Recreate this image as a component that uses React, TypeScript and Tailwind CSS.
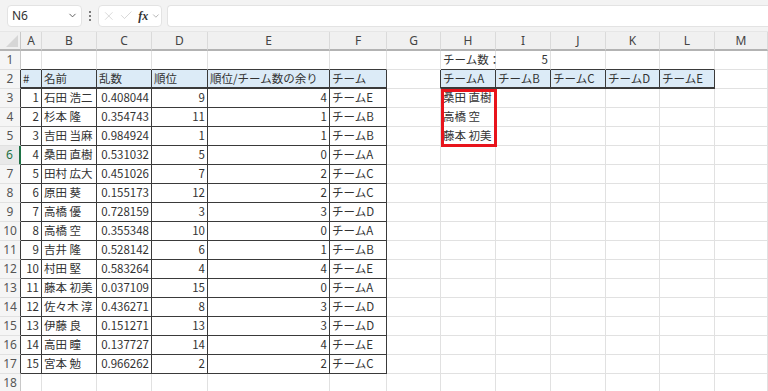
import React from 'react';
import { ChevronDown, X, Check } from 'lucide-react';

const cols = ['A', 'B', 'C', 'D', 'E', 'F', 'G', 'H', 'I', 'J', 'K', 'L', 'M'];

type Cell = { v: string; right?: boolean };

const people: [number, string, string, number, number, string][] = [
    [1, '石田 浩二', '0.408044', 9, 4, 'チームE'],
    [2, '杉本 隆', '0.354743', 11, 1, 'チームB'],
    [3, '吉田 当麻', '0.984924', 1, 1, 'チームB'],
    [4, '桑田 直樹', '0.531032', 5, 0, 'チームA'],
    [5, '田村 広大', '0.451026', 7, 2, 'チームC'],
    [6, '原田 葵', '0.155173', 12, 2, 'チームC'],
    [7, '高橋 優', '0.728159', 3, 3, 'チームD'],
    [8, '高橋 空', '0.355348', 10, 0, 'チームA'],
    [9, '吉井 隆', '0.528142', 6, 1, 'チームB'],
    [10, '村田 堅', '0.583264', 4, 4, 'チームE'],
    [11, '藤本 初美', '0.037109', 15, 0, 'チームA'],
    [12, '佐々木 淳', '0.436271', 8, 3, 'チームD'],
    [13, '伊藤 良', '0.151271', 13, 3, 'チームD'],
    [14, '高田 瞳', '0.137727', 14, 4, 'チームE'],
    [15, '宮本 勉', '0.966262', 2, 2, 'チームC'],
];

const teamA = ['桑田 直樹', '高橋 空', '藤本 初美'];

// cells[row][colIndex]
const buildCells = () => {
    const cells: Record<number, Record<number, Cell>> = {};
    const set = (r: number, c: number, cell: Cell) => {
        cells[r] = cells[r] || {};
        cells[r][c] = cell;
    };
    set(1, 7, { v: 'チーム数：' });
    set(1, 8, { v: '5', right: true });
    ['#', '名前', '乱数', '順位', '順位/チーム数の余り', 'チーム'].forEach((h, i) => set(2, i, { v: h }));
    ['チームA', 'チームB', 'チームC', 'チームD', 'チームE'].forEach((h, i) => set(2, 7 + i, { v: h }));
    people.forEach((p, i) => {
        const r = 3 + i;
        set(r, 0, { v: String(p[0]), right: true });
        set(r, 1, { v: p[1] });
        set(r, 2, { v: p[2], right: true });
        set(r, 3, { v: String(p[3]), right: true });
        set(r, 4, { v: String(p[4]), right: true });
        set(r, 5, { v: p[5] });
    });
    teamA.forEach((n, i) => set(3 + i, 7, { v: n }));
    return cells;
};

const cells = buildCells();

const inTable = (r: number, c: number) =>
    (r >= 2 && r <= 17 && c >= 0 && c <= 5) || (r === 2 && c >= 7 && c <= 11);

const isHeader = (r: number, c: number) => r === 2 && inTable(r, c);

const rows = Array.from({ length: 18 }, (_, i) => i + 1);

const font = { fontFamily: '"Noto Sans CJK JP", "Noto Sans", sans-serif' };

const GridCell: React.FC<{ r: number; c: number }> = ({ r, c }) => {
    const cell = cells[r]?.[c];
    const rightDark = inTable(r, c) || inTable(r, c + 1);
    const bottomDark = inTable(r, c) || inTable(r + 1, c);
    const thick = isHeader(r, c);
    const rightCls = rightDark ? 'border-r-[#3a3a3a]' : 'border-r-[#e1e1e1]';
    const bottomCls = thick
        ? 'border-b-2 border-b-[#3a3a3a]'
        : bottomDark
            ? 'border-b border-b-[#3a3a3a]'
            : 'border-b border-b-[#e1e1e1]';
    const fill = thick ? 'bg-[#dcebf7]' : 'bg-white';
    return (
        <div
            className={`relative h-[19px] border-r ${rightCls} ${bottomCls} ${fill} flex items-center overflow-visible whitespace-nowrap text-[11.5px] text-[#333] ${cell?.right ? 'justify-end pr-[2px]' : 'pl-[2px]'}`}
        >
            {cell?.v}
            {r === 3 && c === 7 && (
                <div className="absolute left-0 top-0 z-10 w-[56px] h-[58px] border-[3px] border-[#e8141c] pointer-events-none" />
            )}
        </div>
    );
};

const RowHeader: React.FC<{ r: number }> = ({ r }) => {
    const active = r === 6;
    const rightCls = active
        ? 'border-r-2 border-r-[#1e7145]'
        : inTable(r, 0)
            ? 'border-r border-r-[#3a3a3a]'
            : 'border-r border-r-[#c8c8c8]';
    return (
        <div
            className={`h-[19px] ${rightCls} border-b border-b-[#e1e1e1] flex items-center justify-center text-[12px] ${active ? 'bg-[#e9e9e9] text-[#1e7145]' : 'bg-[#f5f5f5] text-[#555]'}`}
            style={{ fontFamily: '"Noto Sans", sans-serif' }}
        >
            {r}
        </div>
    );
};

export default function App() {
    return (
        <div className="w-[768px] h-[391px] overflow-hidden bg-white" style={font}>
            {/* formula bar */}
            <div className="h-[32px] bg-[#f3f3f3] flex items-center pl-[7px] gap-[5px] border-b border-[#e6e6e6]">
                <div className="w-[75px] h-[22px] bg-white rounded-[4px] border border-[#e3e3e3] flex items-center justify-between pl-[4px] pr-[3px]">
                    <span className="text-[12px] text-[#333]" style={{ fontFamily: '"Noto Sans", sans-serif' }}>N6</span>
                    <ChevronDown size={11} strokeWidth={2} className="text-[#555]" />
                </div>
                <div className="w-[6px] flex flex-col items-center gap-[2px]">
                    <span className="w-[2px] h-[2px] bg-[#555] rounded-full" />
                    <span className="w-[2px] h-[2px] bg-[#555] rounded-full" />
                    <span className="w-[2px] h-[2px] bg-[#555] rounded-full" />
                </div>
                <div className="w-[64px] h-[22px] bg-white rounded-[4px] border border-[#e3e3e3] flex items-center pl-[3px] gap-[3px]">
                    <X size={14} strokeWidth={1.1} className="text-[#c4c4c4]" />
                    <Check size={15} strokeWidth={1.1} className="text-[#c4c4c4]" />
                    <span
                        className="text-[12px] italic font-bold text-[#333] ml-[2px]"
                        style={{ fontFamily: '"Liberation Serif", serif' }}
                    >
                        fx
                    </span>
                    <ChevronDown size={10} strokeWidth={1.5} className="text-[#888]" />
                </div>
                <div className="flex-1 h-[22px] bg-white rounded-l-[4px] border border-r-0 border-[#e3e3e3]" />
            </div>

            {/* sheet */}
            <div className="grid grid-cols-[21px_21px_55px_55px_56px_122px_57px_54px_55px_55px_55px_54px_55px_53px]">
                {/* column headers */}
                <div className="h-[19px] bg-[#f0f0f0] border-r border-r-[#c8c8c8] border-b-2 border-b-[#b3b3b3] relative overflow-hidden">
                    <div className="absolute right-[2px] bottom-[2px] w-0 h-0 border-l-[12px] border-l-transparent border-b-[12px] border-b-[#d6d6d6]" />
                </div>
                {cols.map((c) => (
                    <div
                        key={c}
                        className="h-[19px] bg-[#f0f0f0] border-r border-r-[#dadada] border-b-2 border-b-[#b3b3b3] flex items-center justify-center text-[12px] text-[#444]"
                        style={{ fontFamily: '"Noto Sans", sans-serif' }}
                    >
                        {c}
                    </div>
                ))}

                {rows.map((r) => (
                    <React.Fragment key={r}>
                        <RowHeader r={r} />
                        {cols.map((_, c) => (
                            <GridCell key={c} r={r} c={c} />
                        ))}
                    </React.Fragment>
                ))}
            </div>
        </div>
    );
}
